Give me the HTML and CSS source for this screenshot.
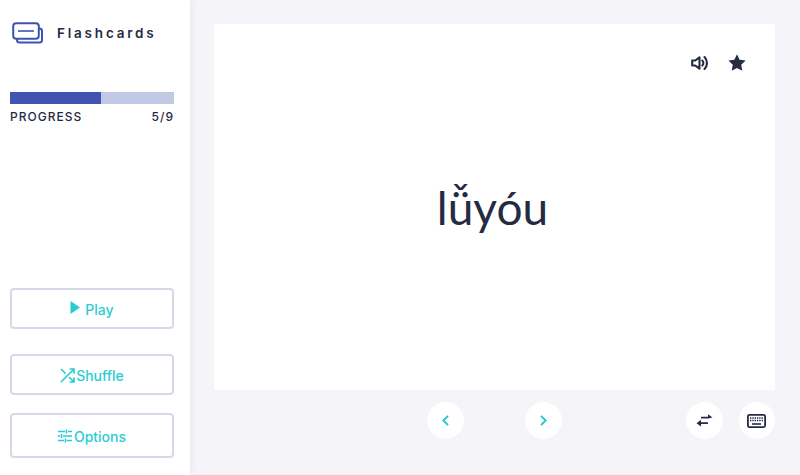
FILE: index.html
```html
<!DOCTYPE html>
<html lang="zh">
<head>
<meta charset="utf-8">
<title>Flashcards</title>
<link rel="stylesheet" href="styles.css">
</head>
<body>
<div class="app">
  <aside class="sidebar">
    <div class="brand">
      <svg class="brand-icon" width="32" height="22" viewBox="0 0 32 22" fill="none" stroke="#3f51b1" stroke-width="2">
        <path d="M5 16.500v1.500a2.500 2.500 0 0 0 2.500 2.500h20a2.500 2.500 0 0 0 2.500-2.500v-9a2.500 2.500 0 0 0-2.500-2.500h-1"/>
        <rect x="1.200" y="1.200" width="25.600" height="15.600" rx="3" fill="#fff"/>
        <path d="M6 9h16" stroke-width="1.600"/>
      </svg>
      <span class="brand-name">Flashcards</span>
    </div>
    <div class="progress">
      <div class="track"><div class="fill"></div></div>
      <div class="progress-row"><span>PROGRESS</span><span>5/9</span></div>
    </div>
    <div class="actions">
      <button class="action play">
        <svg class="play-icon" width="10" height="13" viewBox="0 0 10 13"><path d="M.5 0v13L10 6.500z" fill="#29cdd1"/></svg>
        <span>Play</span>
      </button>
      <button class="action shuffle">
        <svg width="15" height="15" viewBox="0 0 15 15" fill="none" stroke="#29cdd1" stroke-width="1.700"><path d="M1 1l4.500 4.500M9 9l4.500 4.500M1 14L14 1M9.500 1H14v4.500M14 9.500V14H9.500"/></svg>
        <span>Shuffle</span>
      </button>
      <button class="action options">
        <svg width="14" height="14" viewBox="0 0 14 14" fill="none" stroke="#29cdd1" stroke-width="1.600"><path d="M0 2.500h7M10 2.500h4M8.500 .5v4M0 7h2M5 7h9M3.500 5v4M0 11.500h6M9 11.500h5M7.500 9.500v4"/></svg>
        <span>Options</span>
      </button>
    </div>
  </aside>
  <main class="main">
    <section class="card">
      <div class="card-tools">
        <svg width="18" height="16" viewBox="0 0 18 16" fill="none" stroke="#262b44" stroke-width="2.100"><path d="M1.200 5.500h3L8.500 2.300v11.400L4.200 10.500h-3z" stroke-linejoin="round"/><path d="M11.300 5.500a3.500 3.500 0 0 1 0 5M13.500 2a8.500 8.500 0 0 1 0 12" stroke-linecap="round"/></svg>
        <svg width="18" height="17" viewBox="0 0 18 17"><path d="M9 .3l2.600 5.500 6 .8-4.400 4.200 1.100 6L9 13.900l-5.300 2.900 1.100-6L.4 6.600l6-.8z" fill="#262b44"/></svg>
      </div>
      <div class="term">lǚyóu</div>
    </section>
    <nav class="controls">
      <div class="pager">
        <button class="round">
          <svg width="7" height="11" viewBox="0 0 7 11" fill="none" stroke="#1fc8cc" stroke-width="1.800"><path d="M6 .8L1.300 5.500 6 10.200"/></svg>
        </button>
        <button class="round">
          <svg width="7" height="11" viewBox="0 0 7 11" fill="none" stroke="#1fc8cc" stroke-width="1.800"><path d="M1 .8l4.700 4.700L1 10.200"/></svg>
        </button>
      </div>
      <div class="extras">
        <button class="round">
          <svg width="17" height="13" viewBox="0 0 17 13"><path d="M5 2.800h7V.3l4.500 3.200L12 4.600H5zM12 8.300H5V5.800L.5 9.300 5 12.600v-2.500h7z" fill="#262b44"/></svg>
        </button>
        <button class="round">
          <svg width="19" height="14" viewBox="0 0 19 14" fill="none" stroke="#262b44"><rect x=".9" y=".9" width="17.200" height="12.200" rx="1.500" stroke-width="1.800"/><path d="M3 4h13M3 6.500h13" stroke-width="1.500" stroke-dasharray="1.400 .9"/><path d="M5 10h9" stroke-width="1.600"/></svg>
        </button>
      </div>
    </nav>
  </main>
</div>
</body>
</html>
```

FILE: styles.css
```css
* { box-sizing: border-box; }
html, body { margin: 0; height: 100%; }
body { font-family: Lato, "Noto Sans CJK SC", sans-serif; background: #f4f4f9; color: #262b44; overflow: hidden; }
.app { display: flex; height: 475px; }
.sidebar { width: 190px; flex: none; background: #fff; box-shadow: 0 0 8px rgba(60, 60, 110, .1); padding: 0 16px 17px 10px; display: flex; flex-direction: column; }
.brand { display: flex; align-items: center; height: 65px; padding-left: 2px; gap: 13px; }
.brand-icon { flex: none; margin-top: 1px; }
.brand-name { font-family: Inter, sans-serif; font-size: 13.500px; font-weight: 600; letter-spacing: 2.800px; color: #262b44; }
.progress { margin-top: 27px; }
.track { height: 12px; background: #c2c9e4; }
.fill { width: 55.500%; height: 100%; background: #4155b0; }
.progress-row { display: flex; justify-content: space-between; font-family: Inter, sans-serif; font-size: 12px; font-weight: 500; letter-spacing: 1px; margin-top: 5px; line-height: 15px; }
.actions { margin-top: auto; display: flex; flex-direction: column; }
.action { width: 100%; background: #fff; border: 2px solid #d6dae8; border-radius: 4px; color: #29cdd1; font-family: Inter, sans-serif; font-size: 14px; font-weight: 500; display: flex; align-items: center; justify-content: center; padding: 1px 0 0; }
.play { height: 41px; gap: 5px; }
.play-icon { margin-top: -3px; }
.shuffle { height: 41px; margin-top: 25px; gap: 1px; }
.options { height: 45px; margin-top: 18px; gap: 2px; }
.main { flex: 1; padding: 24px 25px 0 24px; display: flex; flex-direction: column; }
.card { position: relative; height: 366px; background: #fff; display: flex; align-items: center; justify-content: center; padding-right: 4px; }
.card-tools { position: absolute; top: 30px; right: 29px; display: flex; align-items: center; gap: 19px; }
.term { font-size: 46px; line-height: 1; color: #262b44; margin-top: 2px; }
.controls { display: flex; margin-top: 12px; justify-content: space-between; padding-left: 213px; }
.pager { display: flex; gap: 61.500px; }
.extras { display: flex; gap: 16px; }
.round { width: 36.500px; height: 37px; border: 0; border-radius: 50%; background: #fff; padding: 0; display: flex; align-items: center; justify-content: center; }
```
